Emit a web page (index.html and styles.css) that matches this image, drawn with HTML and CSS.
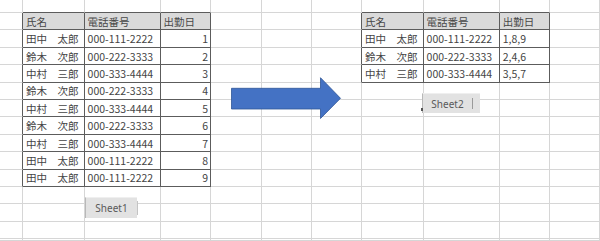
FILE: index.html
```html
<!DOCTYPE html>
<html lang="ja">
<head>
    <meta charset="UTF-8">
    <meta name="viewport" content="width=device-width, initial-scale=1.0">
    <title>出勤日まとめ</title>
    <link rel="stylesheet" href="styles.css">
</head>
<body>
    <!-- Worksheet grid, cells are filled in by the script below -->
    <div class="sheet" id="sheet"></div>

    <!-- Shapes pasted on top of the sheet -->
    <svg class="arrow" width="112" height="44" viewBox="0 0 112 44">
        <polygon points="0.5,11.3 89.5,11.3 89.5,0.7 109.5,21.3 89.5,41.5 89.5,32 0.5,32"
                 fill="#4472c4" stroke="#2f5597" stroke-width="0.8"/>
    </svg>
    <div class="tab tab-one">Sheet1</div>
    <div class="tab tab-two">Sheet2</div>

    <script>
        const ROWS = 15;
        const COLS = 11;

        // Each block: top-left cell, rows of values, and whether the last column is a number
        const blocks = [
            {
                row: 1, col: 1, numeric: true,
                data: [
                    ['氏名', '電話番号', '出勤日'],
                    ['田中　太郎', '000-111-2222', '1'],
                    ['鈴木　次郎', '000-222-3333', '2'],
                    ['中村　三郎', '000-333-4444', '3'],
                    ['鈴木　次郎', '000-222-3333', '4'],
                    ['中村　三郎', '000-333-4444', '5'],
                    ['鈴木　次郎', '000-222-3333', '6'],
                    ['中村　三郎', '000-333-4444', '7'],
                    ['田中　太郎', '000-111-2222', '8'],
                    ['田中　太郎', '000-111-2222', '9']
                ]
            },
            {
                row: 1, col: 7, numeric: false,
                data: [
                    ['氏名', '電話番号', '出勤日'],
                    ['田中　太郎', '000-111-2222', '1,8,9'],
                    ['鈴木　次郎', '000-222-3333', '2,4,6'],
                    ['中村　三郎', '000-333-4444', '3,5,7']
                ]
            }
        ];

        // Lookup of filled cells by "row,col"
        const filled = {};
        blocks.forEach(block => {
            block.data.forEach((values, r) => {
                values.forEach((value, c) => {
                    filled[(block.row + r) + ',' + (block.col + c)] = {
                        text: value,
                        head: r === 0,
                        num: block.numeric && r > 0 && c === values.length - 1
                    };
                });
            });
        });

        const inBlock = (r, c) => Boolean(filled[r + ',' + c]);
        const sheet = document.getElementById('sheet');

        for (let r = 0; r < ROWS; r++) {
            for (let c = 0; c < COLS; c++) {
                const cell = document.createElement('div');
                cell.className = 'cell';
                const info = filled[r + ',' + c];

                // Dark rule on a side that touches a filled block
                if (info || inBlock(r, c + 1)) cell.classList.add('edge-r');
                if (info || inBlock(r + 1, c)) cell.classList.add('edge-b');

                if (info) {
                    cell.textContent = info.text;
                    if (info.head) cell.classList.add('head');
                    if (info.num) cell.classList.add('num');
                }
                sheet.appendChild(cell);
            }
        }
    </script>
</body>
</html>
```

FILE: styles.css
```css
/* General */
html, body {
    margin: 0;
    padding: 0;
    width: 600px;
    height: 241px;
    overflow: hidden;
    background-color: #fff;
}

body {
    position: relative;
    font-family: "Noto Sans CJK JP", "Noto Sans", sans-serif;
    color: #444;
}

/* Worksheet grid */
.sheet {
    display: grid;
    grid-template-columns: 23px 61.6px 76px 50.4px 51px 50px 50px 61.6px 76.2px 50.5px 1fr;
    grid-template-rows: 13px repeat(13, 17.42px) 1fr;
    width: 600px;
    height: 241px;
}

.cell {
    box-sizing: border-box;
    border-right: 1px solid #d6d6d6;
    border-bottom: 1px solid #d6d6d6;
    padding: 0 2px 0 3px;
    display: flex;
    align-items: center;
    font-size: 10.5px;
    white-space: nowrap;
    overflow: hidden;
}

.cell.edge-r {
    border-right-color: #5c5c5c;
}

.cell.edge-b {
    border-bottom-color: #5c5c5c;
}

.cell.head {
    background-color: #dadada;
    color: #484848;
}

.cell.num {
    justify-content: flex-end;
}

/* Arrow shape */
.arrow {
    position: absolute;
    left: 231px;
    top: 77px;
}

/* Sheet tabs pasted as pictures */
.tab {
    position: absolute;
    box-sizing: border-box;
    display: flex;
    align-items: center;
    justify-content: center;
    background-color: #e2e2e2;
    border-left: 1px solid #b8b8b8;
    border-top: 1px solid #efefef;
    color: #5a5a5a;
    font-family: "Noto Sans", sans-serif;
    font-size: 10px;
}

.tab-one {
    left: 85px;
    top: 197px;
    width: 52px;
    height: 21px;
}

.tab-one::after {
    content: "";
    position: absolute;
    right: -1px;
    top: 3px;
    bottom: 3px;
    border-right: 1px solid #c4c4c4;
}

.tab-two {
    left: 422px;
    top: 93px;
    width: 58px;
    height: 20px;
    padding-right: 8px;
}

.tab-two::after {
    content: "";
    position: absolute;
    right: 7px;
    top: 4px;
    bottom: 4px;
    border-right: 1px solid #9a9a9a;
}

.tab-two::before {
    content: "";
    position: absolute;
    left: -2px;
    bottom: 2px;
    width: 2px;
    height: 3px;
    background-color: #555;
}
```
